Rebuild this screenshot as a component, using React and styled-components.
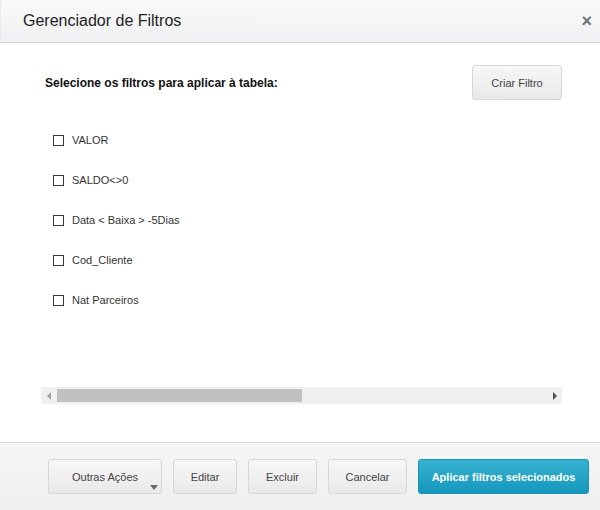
import React from 'react'
import styled, { createGlobalStyle } from 'styled-components'

const GlobalStyle = createGlobalStyle`
  html, body { margin: 0; padding: 0; background: #fff; }
  body { font-family: "Liberation Sans", Arial, sans-serif; }
`

const filtros = ['VALOR', 'SALDO<>0', 'Data < Baixa > -5Dias', 'Cod_Cliente', 'Nat Parceiros']

const App = () => {
  return (
    <>
      <GlobalStyle />
      <Modal>
        <Header>
          <Title>Gerenciador de Filtros</Title>
          <Close>×</Close>
        </Header>
        <Body>
          <TopRow>
            <Lead>Selecione os filtros para aplicar à tabela:</Lead>
            <Button>Criar Filtro</Button>
          </TopRow>
          <List>
            {filtros.map((f) => (
              <Item key={f}>
                <Box />
                <span>{f}</span>
              </Item>
            ))}
          </List>
          <Scrollbar>
            <Arrow>
              <svg width="5" height="8" viewBox="0 0 5 8"><path d="M4 0 L0 4 L4 8 Z" fill="#a3a3a3" /></svg>
            </Arrow>
            <Track>
              <Thumb style={{ width: '50%' }} />
            </Track>
            <Arrow>
              <svg width="5" height="8" viewBox="0 0 5 8"><path d="M1 0 L5 4 L1 8 Z" fill="#505050" /></svg>
            </Arrow>
          </Scrollbar>
        </Body>
        <Footer>
          <Button $w="114px">
            Outras Ações
            <Caret />
          </Button>
          <Button $w="64px">Editar</Button>
          <Button $w="69px">Excluir</Button>
          <Button $w="79px">Cancelar</Button>
          <Primary>Aplicar filtros selecionados</Primary>
        </Footer>
      </Modal>
    </>
  )
}

export default App

const Modal = styled.div`
  width: 600px;
  height: 510px;
  display: flex;
  flex-direction: column;
  background: #fff;
  box-sizing: border-box;
`

const Header = styled.div`
  height: 42px;
  flex: none;
  display: flex;
  align-items: center;
  justify-content: space-between;
  padding: 0 8px 0 22px;
  background: linear-gradient(to bottom, #fafafa, #eff0f1);
  border-bottom: 1px solid #d6d6d6;
  border-left: 1px solid #ebebeb;
`

const Title = styled.h1`
  margin: 0;
  font-size: 16px;
  font-weight: normal;
  color: #222;
`

const Close = styled.span`
  font-size: 18px;
  font-weight: bold;
  color: #707378;
  line-height: 1;
  cursor: pointer;
`

const Body = styled.div`
  flex: 1;
  display: flex;
  flex-direction: column;
  padding: 22px 38px 0 41px;
`

const TopRow = styled.div`
  display: flex;
  align-items: center;
  justify-content: space-between;
  padding-left: 4px;
`

const Lead = styled.p`
  margin: 0;
  font-size: 12px;
  font-weight: bold;
  color: #111;
`

const Button = styled.button`
  position: relative;
  height: 35px;
  width: ${(p) => p.$w || '90px'};
  padding: 0;
  border: 1px solid #d7d7d7;
  border-radius: 3px;
  background: linear-gradient(to bottom, #f7f7f7, #e9e9e9);
  font-family: inherit;
  font-size: 11px;
  color: #444;
  cursor: pointer;
`

const Caret = styled.span`
  position: absolute;
  right: 3px;
  bottom: 3px;
  width: 0;
  height: 0;
  border-left: 4px solid transparent;
  border-right: 4px solid transparent;
  border-top: 5px solid #6a6a6a;
`

const Primary = styled.button`
  height: 35px;
  width: 171px;
  padding: 0;
  border: 1px solid #1a93b3;
  border-radius: 3px;
  background: linear-gradient(to bottom, #36b2d0, #1597bd);
  font-family: inherit;
  font-size: 11px;
  font-weight: bold;
  color: #fff;
  cursor: pointer;
`

const List = styled.div`
  display: flex;
  flex-direction: column;
  gap: 28px;
  margin-top: 34px;
  padding-left: 12px;
`

const Item = styled.label`
  display: flex;
  align-items: center;
  gap: 8px;
  font-size: 11px;
  color: #333;
  height: 12px;
`

const Box = styled.span`
  width: 9px;
  height: 9px;
  border: 1px solid #3a3040;
  background: #fff;
`

const Scrollbar = styled.div`
  margin-top: auto;
  margin-bottom: 38px;
  height: 17px;
  display: flex;
  align-items: center;
  background: #f0f0f0;
`

const Arrow = styled.span`
  width: 16px;
  display: flex;
  justify-content: center;
`

const Track = styled.div`
  flex: 1;
  height: 13px;
`

const Thumb = styled.div`
  height: 100%;
  background: #c1c1c1;
`

const Footer = styled.div`
  height: 67px;
  flex: none;
  display: flex;
  align-items: center;
  justify-content: flex-end;
  gap: 11px;
  padding: 0 11px 0 48px;
  border-top: 1px solid #dcdcdc;
  background: linear-gradient(to bottom, #f6f6f6, #eeeff0);
`
